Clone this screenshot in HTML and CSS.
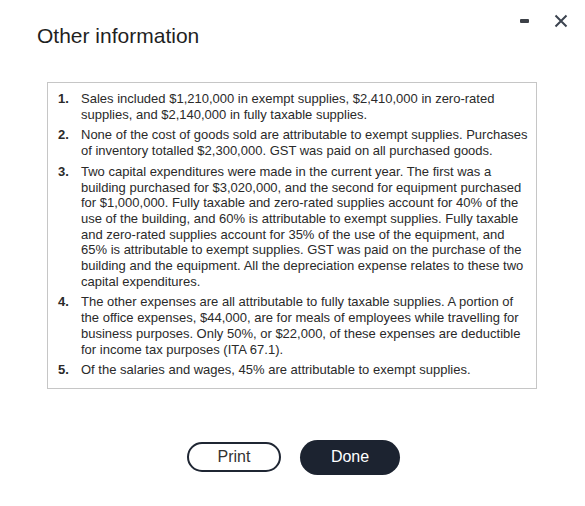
FILE: index.html
```html
<!DOCTYPE html>
<html>
<head>
<meta charset="utf-8">
<link rel="stylesheet" href="styles.css">
</head>
<body>
<div class="dialog">
  <div class="header">
    <h1 class="title">Other information</h1>
    <div class="controls">
      <span class="minimize"></span>
      <svg class="close" width="14" height="14" viewBox="0 0 14 14"><path d="M1.5 1.5 L12.5 12.5 M12.5 1.5 L1.5 12.5" stroke="#3c4450" stroke-width="2" fill="none"/></svg>
    </div>
  </div>
  <div class="box">
    <ol class="items">
      <li class="item"><span class="num">1.</span><span class="text">Sales included $1,210,000 in exempt supplies, $2,410,000 in zero-rated supplies, and $2,140,000 in fully taxable supplies.</span></li>
      <li class="item"><span class="num">2.</span><span class="text">None of the cost of goods sold are attributable to exempt supplies. Purchases of inventory totalled $2,300,000. GST was paid on all purchased goods.</span></li>
      <li class="item"><span class="num">3.</span><span class="text">Two capital expenditures were made in the current year. The first was a building purchased for $3,020,000, and the second for equipment purchased for $1,000,000. Fully taxable and zero-rated supplies account for 40% of the use of the building, and 60% is attributable to exempt supplies. Fully taxable and zero-rated supplies account for 35% of the use of the equipment, and 65% is attributable to exempt supplies. GST was paid on the purchase of the building and the equipment. All the depreciation expense relates to these two capital expenditures.</span></li>
      <li class="item"><span class="num">4.</span><span class="text">The other expenses are all attributable to fully taxable supplies. A portion of the office expenses, $44,000, are for meals of employees while travelling for business purposes. Only 50%, or $22,000, of these expenses are deductible for income tax purposes (ITA 67.1).</span></li>
      <li class="item"><span class="num">5.</span><span class="text">Of the salaries and wages, 45% are attributable to exempt supplies.</span></li>
    </ol>
  </div>
  <div class="actions">
    <button class="btn btn-print">Print</button>
    <button class="btn btn-done">Done</button>
  </div>
</div>
</body>
</html>
```
FILE: styles.css
```css
html, body {
  margin: 0;
  padding: 0;
  background: #ffffff;
}
body {
  font-family: "Liberation Sans", Arial, sans-serif;
  color: #222;
  width: 585px;
  height: 506px;
  overflow: hidden;
}
.dialog {
  display: flex;
  flex-direction: column;
}
.header {
  display: flex;
  justify-content: space-between;
  align-items: flex-start;
  height: 82px;
}
.title {
  margin: 24px 0 0 37px;
  font-size: 21px;
  font-weight: normal;
  line-height: 24px;
  color: #1f1f1f;
}
.controls {
  display: flex;
  align-items: center;
  gap: 25px;
  margin: 14px 17px 0 0;
}
.minimize {
  display: block;
  width: 9px;
  height: 4px;
  background: #3c4047;
  border-radius: 1px;
}
.close {
  display: block;
}
.box {
  margin-left: 47px;
  width: 488px;
  border: 1px solid #c6c6c6;
  padding: 8px 0 10px 0;
}
.items {
  list-style: none;
  margin: 0;
  padding: 0 0 0 10px;
  display: flex;
  flex-direction: column;
  gap: 5px;
}
.item {
  display: flex;
  font-size: 13px;
  line-height: 15.7px;
  color: #2a2a2a;
}
.num {
  width: 23px;
  flex: none;
  font-weight: bold;
}
.text {
  width: 450px;
}
.actions {
  display: flex;
  justify-content: center;
  align-items: center;
  gap: 19px;
  margin-top: 51px;
  padding-left: 2px;
}
.btn {
  font-family: "Liberation Sans", Arial, sans-serif;
  font-size: 16px;
  border-radius: 18px;
  cursor: pointer;
}
.btn-print {
  width: 94px;
  height: 30px;
  background: #fff;
  border: 2px solid #1f2633;
  color: #333;
}
.btn-done {
  width: 100px;
  height: 35px;
  background: #1c2330;
  border: none;
  color: #fff;
}
```
